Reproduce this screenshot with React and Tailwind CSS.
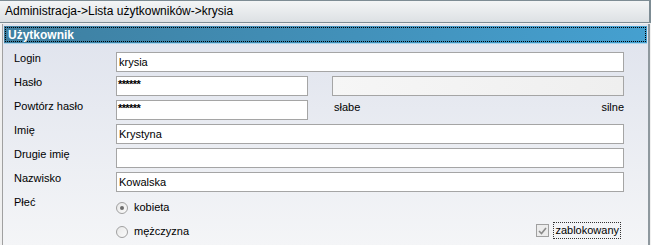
import React from 'react';

const font = { fontFamily: '"Liberation Sans", Arial, sans-serif' };

function Field({ label, value, children }) {
  return (
    <div className="flex items-start h-[24px]">
      <div className="w-[102px] text-[11px] leading-[13px] text-black">{label}</div>
      {children || (
        <div className="w-[508px] h-[20px] bg-white border border-[#a5a5a5] px-[2px] text-[11px] leading-[18px] text-black">
          {value}
        </div>
      )}
    </div>
  );
}

function Stars() {
  return (
    <div className="w-[192px] h-[20px] bg-white border border-[#a5a5a5] px-[1px] text-[11px] font-bold leading-[14px] text-black tracking-[-0.6px]">
      ******
    </div>
  );
}

export default function App() {
  return (
    <div className="w-[651px] h-[245px] overflow-hidden bg-[#f0f0f0] flex flex-col" style={font}>
      {/* breadcrumb */}
      <div className="h-[23px] shrink-0 border-t border-r-2 border-b border-[#7d8c94] bg-gradient-to-b from-[#f3f5f6] to-[#dde1e4] px-[5px] text-[12px] leading-[21px] text-black">
        Administracja-&gt;Lista użytkowników-&gt;krysia
      </div>

      <div className="flex-1 flex flex-col ml-[2px] mr-[1px] mt-[1px] border-l border-[#a0a0a0] border-r-2 border-r-[#8e989e] bg-gradient-to-b from-[#dfe3ed] to-[#f4f5f7] pl-[1px] pr-[1px] pt-[2px]">
        {/* section header */}
        <div className="h-[18px] shrink-0 bg-gradient-to-r from-[#3e7fa0] to-[#45a0d0] border-b border-[#a9d4ec] p-[1px]">
          <div className="h-full border border-dotted border-black px-[2px] text-[12px] leading-[14px] font-bold text-white">
            Użytkownik
          </div>
        </div>

        <div className="flex-1 pl-[10px] pt-[8px]">
          <Field label="Login" value="krysia" />
          <Field label="Hasło">
            <div className="flex items-start">
              <Stars />
              <div className="ml-[24px] w-[292px] h-[20px] border border-[#a5a5a5] bg-gradient-to-r from-[#f6f6f6] to-[#efefef]" />
            </div>
          </Field>
          <Field label="Powtórz hasło">
            <div className="flex items-start">
              <Stars />
              <div className="ml-[26px] w-[290px] flex justify-between pt-[1px] text-[11px] leading-[13px] text-black">
                <span>słabe</span>
                <span>silne</span>
              </div>
            </div>
          </Field>
          <Field label="Imię" value="Krystyna" />
          <Field label="Drugie imię" value="" />
          <Field label="Nazwisko" value="Kowalska" />

          <div className="flex items-start">
            <div className="w-[102px] text-[11px] leading-[13px] text-black">Płeć</div>
            <div className="flex flex-col pt-[5px] gap-[11px]">
              <div className="flex items-center gap-[6px] text-[11px] leading-[13px] text-black">
                <span className="w-[12px] h-[12px] rounded-full border border-[#a0a0a0] bg-gradient-to-br from-[#e8e8e8] to-[#fafafa] flex items-center justify-center">
                  <span className="w-[4px] h-[4px] rounded-full bg-[#6c6c6c]" />
                </span>
                kobieta
              </div>
              <div className="flex items-center gap-[6px] text-[11px] leading-[13px] text-black">
                <span className="w-[12px] h-[12px] rounded-full border border-[#a0a0a0] bg-gradient-to-br from-[#e8e8e8] to-[#fafafa]" />
                mężczyzna
              </div>
            </div>
            <div className="ml-auto mr-[26px] mt-[26px] flex items-center gap-[4px]">
              <span className="w-[13px] h-[13px] border border-[#a0a0a0] bg-[#ececec] flex items-center justify-center">
                <svg width="9" height="8" viewBox="0 0 9 8">
                  <path d="M1 4 L3.5 6.5 L8 1" fill="none" stroke="#8a8a8a" strokeWidth="1.6" />
                </svg>
              </span>
              <span className="border border-dotted border-[#333] px-[1px] text-[11px] leading-[15px] text-black">
                zablokowany
              </span>
            </div>
          </div>
        </div>
      </div>
    </div>
  );
}
